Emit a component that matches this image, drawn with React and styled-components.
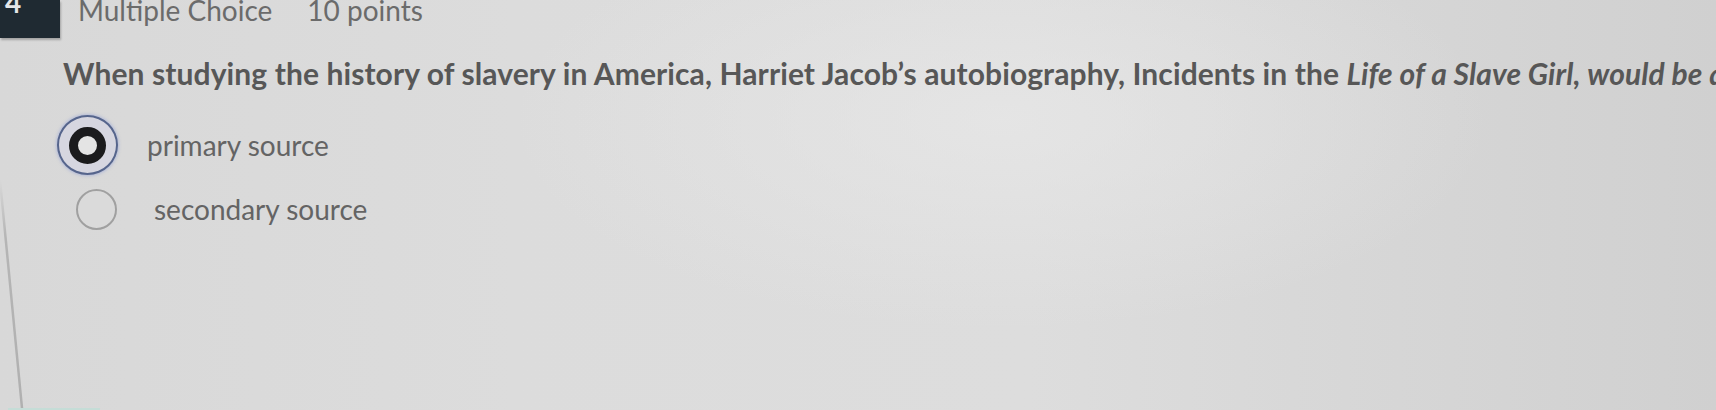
import React from 'react'
import styled, { createGlobalStyle } from 'styled-components'

const Global = createGlobalStyle`
  html, body {
    margin: 0;
    padding: 0;
    overflow: hidden;
  }
  body {
    font-family: Lato, "Open Sans", sans-serif;
    background: #dadada;
  }
`

const Page = styled.div`
  position: relative;
  width: 1716px;
  height: 410px;
  overflow: hidden;
  background:
    radial-gradient(ellipse 700px 300px at 1000px 120px, rgba(232,232,232,0.7), rgba(232,232,232,0) 70%),
    linear-gradient(90deg, #d8d8d8 0%, #dcdcdc 30%, #dddddd 60%, #d0d0d0 100%);
`

const Header = styled.div`
  display: flex;
  align-items: flex-start;
  height: 38px;
`

const Badge = styled.div`
  width: 60px;
  height: 38px;
  background: #1f2a32;
  color: #e4e6e8;
  font-size: 28px;
  font-weight: 700;
  line-height: 4px;
  padding-left: 5px;
  box-sizing: border-box;
  box-shadow: 1px 2px 2px rgba(0,0,0,0.25);
`

const Meta = styled.span`
  font-size: 28px;
  color: #6b6b6b;
  line-height: 28px;
  margin-left: ${p => p.$gap}px;
  margin-top: -4px;
`

const Question = styled.div`
  margin: 20px 0 0 63px;
  font-size: 30px;
  line-height: 31px;
  font-weight: 700;
  color: #575757;
  white-space: nowrap;
  letter-spacing: 0.1px;
  em { font-style: italic; }
`

const Options = styled.div`
  display: flex;
  flex-direction: column;
  margin-top: 26px;
`

const Option = styled.label`
  display: flex;
  align-items: center;
  height: ${p => p.$h}px;
  padding-left: ${p => p.$indent}px;
  font-size: 28px;
  line-height: 28px;
  color: #646464;
`

const Radio = styled.span`
  box-sizing: border-box;
  display: inline-flex;
  align-items: center;
  justify-content: center;
  border-radius: 50%;
  flex-shrink: 0;
  ${p => p.$checked ? `
    width: 61px;
    height: 60px;
    border: 2.5px solid #56658c;
    box-shadow: 0 0 3px 1px rgba(140,155,215,0.5);
    background: #d6d6e0;
    margin-right: 29px;
  ` : `
    width: 41px;
    height: 41px;
    border: 2px solid #a0a0a0;
    background: #dadada;
    margin-right: 37px;
  `}
`

const Dot = styled.span`
  box-sizing: border-box;
  width: 37px;
  height: 37px;
  border-radius: 50%;
  border: 9px solid #1b1b1d;
  background: #e4e4e4;
`

const Edge = styled.svg`
  position: absolute;
  left: 0;
  top: 0;
  pointer-events: none;
`

export default function App() {
  return (
    <Page>
      <Global />
      <Header>
        <Badge>4</Badge>
        <Meta $gap={18}>Multiple Choice</Meta>
        <Meta $gap={35}>10 points</Meta>
      </Header>
      <Question>
        When studying the history of slavery in America, Harriet Jacob’s autobiography, Incidents in the <em>Life of a Slave Girl, would be a</em> primary source
      </Question>
      <Options>
        <Option $h={60} $indent={57}>
          <Radio $checked><Dot /></Radio>
          primary source
        </Option>
        <Option $h={68} $indent={76}>
          <Radio />
          secondary source
        </Option>
      </Options>
      <Edge width="1716" height="410">
        <defs>
          <linearGradient id="edgeFade" x1="0" y1="0" x2="0" y2="1">
            <stop offset="0" stopColor="#b5b5b5" stopOpacity="0" />
            <stop offset="0.25" stopColor="#b5b5b5" stopOpacity="1" />
            <stop offset="1" stopColor="#b0b0b0" stopOpacity="1" />
          </linearGradient>
        </defs>
        <line x1="0" y1="180" x2="22" y2="408" stroke="url(#edgeFade)" strokeWidth="2.5" />
        <line x1="8" y1="409" x2="100" y2="409" stroke="#c5ddd7" strokeWidth="2" />
      </Edge>
    </Page>
  )
}
